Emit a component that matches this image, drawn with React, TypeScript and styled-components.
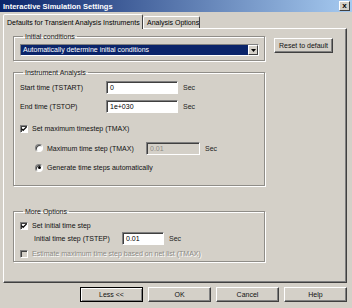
import styled, { createGlobalStyle } from "styled-components";

const GlobalStyle = createGlobalStyle`
  html, body {
    margin: 0;
    padding: 0;
    background: #d4d0c8;
  }
  body {
    font-family: "Liberation Sans", Arial, sans-serif;
    font-size: 7px;
    color: #000;
  }
  * {
    box-sizing: border-box;
  }
`;

const Window = styled.div`
  width: 352px;
  height: 308px;
  background: #d4d0c8;
  display: flex;
  flex-direction: column;
  overflow: hidden;
`;

const TitleBar = styled.div`
  height: 12px;
  display: flex;
  align-items: center;
  justify-content: space-between;
  padding: 0 2px 0 3px;
  background: linear-gradient(to right, #0a246a, #a6caf0);
  color: #fff;
  font-weight: bold;
  font-size: 7.5px;
`;

const CloseBtn = styled.div`
  width: 11px;
  height: 10px;
  background: #d4d0c8;
  border: 1px solid;
  border-color: #fff #404040 #404040 #fff;
  color: #000;
  font-size: 8px;
  font-weight: bold;
  line-height: 7px;
  display: flex;
  justify-content: center;
`;

const Body = styled.div`
  padding: 2px 5px 0 3px;
  display: flex;
  flex-direction: column;
`;

const TabRow = styled.div`
  display: flex;
  align-items: flex-end;
  height: 14px;
`;

const Tab = styled.div<{ $active?: boolean; $w: number }>`
  height: ${(p) => (p.$active ? 15 : 12)}px;
  margin-bottom: ${(p) => (p.$active ? -1 : 0)}px;
  width: ${(p) => p.$w}px;
  padding: 0 3px;
  display: flex;
  align-items: center;
  white-space: nowrap;
  overflow: hidden;
  background: #d4d0c8;
  border: 1px solid;
  border-bottom: none;
  border-color: #fff #404040 transparent #fff;
  border-radius: 2px 2px 0 0;
  position: relative;
  z-index: ${(p) => (p.$active ? 2 : 1)};
`;

const Panel = styled.div`
  width: 344px;
  height: 255px;
  border: 1px solid;
  border-color: #fff #404040 #404040 #fff;
  box-shadow: inset -1px -1px 0 #808080;
  display: flex;
  padding: 3px 0 0 9px;
`;

const LeftCol = styled.div`
  width: 252px;
  display: flex;
  flex-direction: column;
`;

const RightCol = styled.div`
  margin-left: 9px;
  padding-top: 6px;
`;

const Group = styled.fieldset<{ $top: number; $pb: number }>`
  margin: ${(p) => p.$top}px 0 0 0;
  padding: 0 6px ${(p) => p.$pb}px 6px;
  border: 1px solid #8f8d88;
  box-shadow: inset 1px 1px 0 #fff, 1px 1px 0 #fff;
  min-width: 0;
  display: flex;
  flex-direction: column;
`;

const Legend = styled.legend`
  padding: 0 2px;
  margin-left: 3px;
  line-height: 9px;
  color: #1a1a1a;
`;

const Combo = styled.div`
  margin-top: 3px;
  height: 12px;
  width: 239px;
  display: flex;
  border: 1px solid;
  border-color: #808080 #fff #fff #808080;
  background: #fff;
`;

const ComboText = styled.div`
  flex: 1;
  background: #0a246a;
  color: #fff;
  line-height: 10px;
  padding-left: 2px;
`;

const ComboArrow = styled.div`
  width: 10px;
  background: #d4d0c8;
  border: 1px solid;
  border-color: #fff #404040 #404040 #fff;
  display: flex;
  align-items: center;
  justify-content: center;
`;

const Row = styled.div<{ $mt: number; $h?: number; $indent?: number }>`
  display: flex;
  align-items: center;
  margin-top: ${(p) => p.$mt}px;
  height: ${(p) => p.$h ?? 9}px;
  padding-left: ${(p) => p.$indent ?? 0}px;
`;

const Label = styled.span<{ $w?: number; $disabled?: boolean }>`
  width: ${(p) => (p.$w ? `${p.$w}px` : "auto")};
  flex-shrink: 0;
  white-space: nowrap;
  color: ${(p) => (p.$disabled ? "#8c8a85" : "#111")};
  text-shadow: ${(p) => (p.$disabled ? "1px 1px 0 #fff" : "none")};
`;

const TextBox = styled.div<{ $w: number; $disabled?: boolean }>`
  width: ${(p) => p.$w}px;
  height: 13px;
  border: 1px solid;
  border-color: #808080 #fff #fff #808080;
  box-shadow: inset 1px 1px 0 #404040;
  background: ${(p) => (p.$disabled ? "#d4d0c8" : "#fff")};
  color: ${(p) => (p.$disabled ? "#8c8a85" : "#000")};
  padding: 0 0 0 3px;
  line-height: 11px;
`;

const Unit = styled.span`
  margin-left: 5px;
  color: #222;
`;

const CheckBox = styled.div<{ $disabled?: boolean }>`
  width: 8px;
  height: 8px;
  margin-right: 4px;
  border: 1px solid;
  border-color: #808080 #fff #fff #808080;
  box-shadow: inset 1px 1px 0 #404040;
  background: ${(p) => (p.$disabled ? "#d4d0c8" : "#fff")};
  display: flex;
  align-items: center;
  justify-content: center;
`;

const Radio = styled.div<{ $on?: boolean }>`
  width: 8px;
  height: 8px;
  margin-right: 4px;
  border-radius: 50%;
  background: #fff;
  border: 1px solid;
  border-color: #808080 #fff #fff #808080;
  box-shadow: inset 1px 1px 0 #404040;
  display: flex;
  align-items: center;
  justify-content: center;
  &::after {
    content: "";
    width: 3px;
    height: 3px;
    border-radius: 50%;
    background: ${(p) => (p.$on ? "#000" : "transparent")};
  }
`;

const Button = styled.div<{ $w: number; $default?: boolean }>`
  width: ${(p) => p.$w}px;
  height: 15px;
  display: flex;
  align-items: center;
  justify-content: center;
  white-space: nowrap;
  background: #d4d0c8;
  border: 1px solid;
  border-color: ${(p) =>
    p.$default ? "#000" : "#fff #404040 #404040 #fff"};
  box-shadow: ${(p) =>
    p.$default
      ? "inset 1px 1px 0 #fff, inset -1px -1px 0 #808080"
      : "inset -1px -1px 0 #808080"};
  color: #111;
`;

const Footer = styled.div`
  display: flex;
  gap: 5px;
  margin-top: 4px;
  padding-left: 77px;
`;

const Check = () => (
  <svg width="6" height="6" viewBox="0 0 7 7">
    <path d="M0.5 3 L2.5 5 L6.5 1" stroke="#000" strokeWidth="1.4" fill="none" />
  </svg>
);

const Arrow = () => (
  <svg width="5" height="3" viewBox="0 0 5 3">
    <path d="M0 0 H5 L2.5 3 Z" fill="#000" />
  </svg>
);

export default function App() {
  return (
    <Window>
      <GlobalStyle />
      <TitleBar>
        <span>Interactive Simulation Settings</span>
        <CloseBtn>x</CloseBtn>
      </TitleBar>
      <Body>
        <TabRow>
          <Tab $active $w={140}>
            Defaults for Transient Analysis Instruments
          </Tab>
          <Tab $w={57}>Analysis Options</Tab>
        </TabRow>
        <Panel>
          <LeftCol>
            <Group $top={0} $pb={4}>
              <Legend>Initial conditions</Legend>
              <Combo>
                <ComboText>Automatically determine initial conditions</ComboText>
                <ComboArrow>
                  <Arrow />
                </ComboArrow>
              </Combo>
            </Group>

            <Group $top={7} $pb={13}>
              <Legend>Instrument Analysis</Legend>
              <Row $mt={3} $h={14}>
                <Label $w={86}>Start time (TSTART)</Label>
                <TextBox $w={72}>0</TextBox>
                <Unit>Sec</Unit>
              </Row>
              <Row $mt={5} $h={14}>
                <Label $w={86}>End time (TSTOP)</Label>
                <TextBox $w={72}>1e+030</TextBox>
                <Unit>Sec</Unit>
              </Row>
              <Row $mt={11}>
                <CheckBox>
                  <Check />
                </CheckBox>
                <Label>Set maximum timestep (TMAX)</Label>
              </Row>
              <Row $mt={8} $h={14} $indent={15}>
                <Radio />
                <Label $w={99}>Maximum time step (TMAX)</Label>
                <TextBox $w={54} $disabled>
                  0.01
                </TextBox>
                <Unit>Sec</Unit>
              </Row>
              <Row $mt={8} $indent={15}>
                <Radio $on />
                <Label>Generate time steps automatically</Label>
              </Row>
            </Group>

            <Group $top={21} $pb={3}>
              <Legend>More Options</Legend>
              <Row $mt={5}>
                <CheckBox>
                  <Check />
                </CheckBox>
                <Label>Set initial time step</Label>
              </Row>
              <Row $mt={2} $h={13} $indent={14}>
                <Label $w={88}>Initial time step (TSTEP)</Label>
                <TextBox $w={42}>0.01</TextBox>
                <Unit>Sec</Unit>
              </Row>
              <Row $mt={4}>
                <CheckBox $disabled />
                <Label $disabled>
                  Estimate maximum time step based on net list (TMAX)
                </Label>
              </Row>
            </Group>
          </LeftCol>
          <RightCol>
            <Button $w={59}>Reset to default</Button>
          </RightCol>
        </Panel>
        <Footer>
          <Button $w={64} $default>
            Less &lt;&lt;
          </Button>
          <Button $w={64}>OK</Button>
          <Button $w={64}>Cancel</Button>
          <Button $w={64}>Help</Button>
        </Footer>
      </Body>
    </Window>
  );
}
